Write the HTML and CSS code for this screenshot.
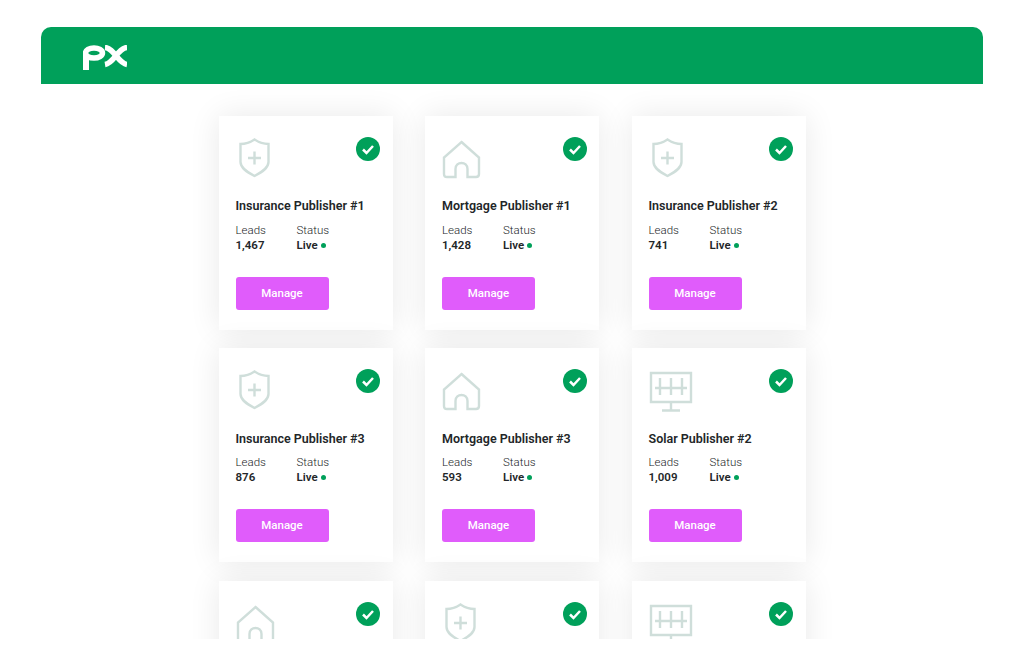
FILE: index.html
```html
<!DOCTYPE html>
<html lang="en">
<head>
  <meta charset="UTF-8">
  <title>PX Publishers</title>
  <link rel="stylesheet" href="styles.css">
</head>
<body>
  <svg class="defs" width="0" height="0">
    <symbol id="shield" viewBox="0 0 44 42">
      <path d="M18.500 1.500 C23 4.500 28 6 32.500 6 V24 C32.500 30 26 34 18.500 38 C11 34 4.500 30 4.500 24 V6 C9 6 14 4.500 18.500 1.500 Z"/>
      <path d="M18.500 13.500 V26.500 M12 20 H25"/>
    </symbol>
    <symbol id="house" viewBox="0 0 44 42">
      <path d="M19.500 4 L37 19.500 V36 C37 38 36 39 34 39 H25.500 V31 C25.500 23 13.500 23 13.500 31 V39 H5 C3 39 2 38 2 36 V19.500 Z"/>
    </symbol>
    <symbol id="solar" viewBox="0 0 44 42">
      <path d="M2 3 H42 V32 H2 Z"/>
      <path d="M6 18 H38 M11 8 V25 M22 8 V25 M33 8 V25 M22 32 V40.500 M13 40.500 H31"/>
    </symbol>
    <symbol id="check" viewBox="0 0 24 24">
      <circle cx="12" cy="12" r="12" class="check-disc"/>
      <path d="M7 12.500 L10.500 16 L17 9" class="check-tick"/>
    </symbol>
  </svg>

  <div class="frame">
    <header class="topbar">
      <svg class="logo" viewBox="0 0 44 25" role="img" aria-label="PX">
        <ellipse cx="11" cy="8" rx="8.500" ry="5" class="logo-p"/>
        <path d="M3 9 V25" class="logo-stem"/>
        <path d="M22 2.500 C31 3 35 18 44 19.500 M44 2.500 C35 3 31 18 22 19.500" class="logo-x"/>
      </svg>
    </header>

    <main class="cards">
      <article class="card">
        <svg class="badge"><use href="#check"/></svg>
        <svg class="kind"><use href="#shield"/></svg>
        <h3>Insurance Publisher #1</h3>
        <div class="stats">
          <div class="stat"><span>Leads</span><b>1,467</b></div>
          <div class="stat"><span>Status</span><b class="live">Live</b></div>
        </div>
        <a class="manage">Manage</a>
      </article>
      <article class="card">
        <svg class="badge"><use href="#check"/></svg>
        <svg class="kind"><use href="#house"/></svg>
        <h3>Mortgage Publisher #1</h3>
        <div class="stats">
          <div class="stat"><span>Leads</span><b>1,428</b></div>
          <div class="stat"><span>Status</span><b class="live">Live</b></div>
        </div>
        <a class="manage">Manage</a>
      </article>
      <article class="card">
        <svg class="badge"><use href="#check"/></svg>
        <svg class="kind"><use href="#shield"/></svg>
        <h3>Insurance Publisher #2</h3>
        <div class="stats">
          <div class="stat"><span>Leads</span><b>741</b></div>
          <div class="stat"><span>Status</span><b class="live">Live</b></div>
        </div>
        <a class="manage">Manage</a>
      </article>

      <article class="card">
        <svg class="badge"><use href="#check"/></svg>
        <svg class="kind"><use href="#shield"/></svg>
        <h3>Insurance Publisher #3</h3>
        <div class="stats">
          <div class="stat"><span>Leads</span><b>876</b></div>
          <div class="stat"><span>Status</span><b class="live">Live</b></div>
        </div>
        <a class="manage">Manage</a>
      </article>
      <article class="card">
        <svg class="badge"><use href="#check"/></svg>
        <svg class="kind"><use href="#house"/></svg>
        <h3>Mortgage Publisher #3</h3>
        <div class="stats">
          <div class="stat"><span>Leads</span><b>593</b></div>
          <div class="stat"><span>Status</span><b class="live">Live</b></div>
        </div>
        <a class="manage">Manage</a>
      </article>
      <article class="card">
        <svg class="badge"><use href="#check"/></svg>
        <svg class="kind"><use href="#solar"/></svg>
        <h3>Solar Publisher #2</h3>
        <div class="stats">
          <div class="stat"><span>Leads</span><b>1,009</b></div>
          <div class="stat"><span>Status</span><b class="live">Live</b></div>
        </div>
        <a class="manage">Manage</a>
      </article>

      <article class="card">
        <svg class="badge"><use href="#check"/></svg>
        <svg class="kind"><use href="#house"/></svg>
      </article>
      <article class="card">
        <svg class="badge"><use href="#check"/></svg>
        <svg class="kind"><use href="#shield"/></svg>
      </article>
      <article class="card">
        <svg class="badge"><use href="#check"/></svg>
        <svg class="kind"><use href="#solar"/></svg>
      </article>
    </main>
  </div>
</body>
</html>
```

FILE: styles.css
```css
body {
  margin: 0;
  background: #ffffff;
  font-family: Roboto, "Liberation Sans", sans-serif;
  color: #222628;
}
.defs {
  position: absolute;
}
.frame {
  width: 942px;
  height: 612px;
  margin: 27px 0 0 41px;
  overflow: hidden;
}
.topbar {
  height: 57px;
  background: #00a05a;
  border-radius: 10px 10px 0 0;
  padding: 18px 0 0 42px;
  box-sizing: border-box;
}
.logo {
  display: block;
  width: 44px;
  height: 25px;
}
.logo-p, .logo-stem, .logo-x {
  fill: none;
  stroke: #ffffff;
}
.logo-p {
  stroke-width: 5.500;
}
.logo-stem {
  stroke-width: 6;
}
.logo-x {
  stroke-width: 5.500;
}
.cards {
  display: grid;
  grid-template-columns: repeat(3, 174px);
  grid-auto-rows: 214px;
  justify-content: center;
  column-gap: 32.500px;
  row-gap: 18.300px;
  padding-top: 32px;
}
.card {
  position: relative;
  background: #ffffff;
  box-shadow: 0 0 30px rgba(0, 0, 0, 0.09);
  padding: 22px 17px 0;
  box-sizing: border-box;
}
.badge {
  position: absolute;
  top: 21px;
  right: 12.500px;
  width: 24px;
  height: 24px;
}
.check-disc {
  fill: #00a05a;
}
.check-tick {
  fill: none;
  stroke: #ffffff;
  stroke-width: 2.500;
}
.kind {
  display: block;
  width: 44px;
  height: 42px;
  fill: none;
  stroke: #cfdeda;
  stroke-width: 2.400;
}
.card h3 {
  margin: 18.300px 0 0;
  font-size: 12.500px;
  line-height: 16px;
  font-weight: 600;
}
.stats {
  display: flex;
  margin-top: 8.700px;
}
.stat {
  width: 61px;
}
.stat span {
  display: block;
  font-size: 11.500px;
  line-height: 15px;
  font-weight: 300;
}
.stat b {
  display: block;
  font-size: 11.500px;
  line-height: 15px;
  font-weight: 600;
}
.live::after {
  content: "";
  display: inline-block;
  width: 5px;
  height: 5px;
  margin-left: 3px;
  border-radius: 50%;
  background: #00a05a;
  vertical-align: 1px;
}
.manage {
  display: block;
  width: 93px;
  height: 33px;
  margin-top: 24px;
  background: #e05cfb;
  border-radius: 3px;
  color: #ffffff;
  font-size: 11.500px;
  font-weight: 500;
  line-height: 33px;
  text-align: center;
}
```
